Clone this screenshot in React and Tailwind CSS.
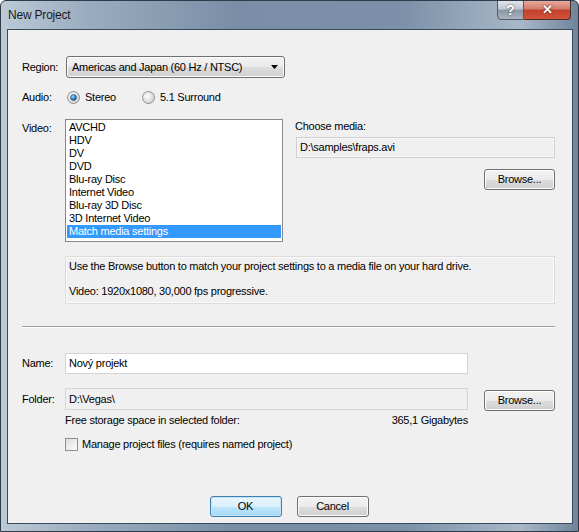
import React from 'react'

const font = { fontFamily: '"Liberation Sans", Arial, sans-serif' }

const Button = ({ children, primary, className = '' }) => (
  <div
    className={`flex items-center justify-center h-[21px] rounded-[3px] border text-[11px] text-black ${
      primary
        ? 'border-[#3c7fb1] bg-[linear-gradient(#eaf6fd_0%,#d9f0fc_50%,#bee6fd_51%,#a7d9f5_100%)] shadow-[inset_0_0_0_1px_#c5e5f7]'
        : 'border-[#707070] bg-[linear-gradient(#f2f2f2_0%,#ebebeb_50%,#dddddd_51%,#cfcfcf_100%)] shadow-[inset_0_0_0_1px_#fcfcfc]'
    } ${className}`}
  >
    {children}
  </div>
)

const Radio = ({ checked }) => (
  <svg width="13" height="13" viewBox="0 0 13 13">
    <defs>
      <radialGradient id="rbg" cx="0.4" cy="0.4" r="0.7">
        <stop offset="0" stopColor="#ffffff" />
        <stop offset="1" stopColor="#cbcbcb" />
      </radialGradient>
      <radialGradient id="rdot" cx="0.4" cy="0.35" r="0.7">
        <stop offset="0" stopColor="#9fd7ff" />
        <stop offset="0.6" stopColor="#2b7fc4" />
        <stop offset="1" stopColor="#1b4f86" />
      </radialGradient>
    </defs>
    <circle cx="6.5" cy="6.5" r="6" fill="url(#rbg)" stroke="#8e8f8f" />
    {checked && <circle cx="6.5" cy="6.5" r="3" fill="url(#rdot)" stroke="#1f4f7f" strokeWidth="0.6" />}
  </svg>
)

const videoItems = [
  'AVCHD',
  'HDV',
  'DV',
  'DVD',
  'Blu-ray Disc',
  'Internet Video',
  'Blu-ray 3D Disc',
  '3D Internet Video',
  'Match media settings',
]

export default function App() {
  return (
    <div
      style={font}
      className="relative w-[579px] h-[532px] overflow-hidden rounded-t-[6px] border border-[#2f3b48] bg-[linear-gradient(90deg,#bccad7_0%,#9aacbf_15%,#7a8fa7_40%,#7c91a9_70%,#a8b8c8_90%,#6f849b_100%)]"
    >
      {/* title bar */}
      <div className="flex h-[28px] items-center pl-[7px] text-[12px] tracking-[-0.2px] text-[#1a1a1a]">
        New Project
      </div>
      <div className="absolute right-[7px] top-[-1px] flex">
        <div className="flex h-[20px] w-[27px] items-center justify-center rounded-bl-[4px] border border-[#4f5b69] bg-[linear-gradient(#dfe5ea_0%,#c0c8d0_45%,#8a96a3_50%,#a9b4bf_100%)] text-[14px] font-bold text-white [text-shadow:0_0_2px_#333]">
          ?
        </div>
        <div className="flex h-[20px] w-[47px] items-center justify-center rounded-br-[4px] border border-l-0 border-[#4f2b26] bg-[linear-gradient(#e9a99c_0%,#d27a6a_45%,#c2412c_50%,#d2543c_100%)] text-[13px] font-bold text-white [text-shadow:0_0_2px_#3a0000]">
          ✕
        </div>
      </div>

      {/* client area */}
      <div className="absolute left-[6px] top-[28px] w-[566px] h-[495px] border border-[#3b4a5a] bg-[#f0f0f0] text-[11px] tracking-[-0.25px] text-black">
        <div className="pl-[14px]">
          {/* Region */}
          <div className="mt-[26px] flex h-[22px] items-center">
            <div className="w-[44px]">Region:</div>
            <div className="flex h-[22px] w-[219px] items-center justify-between rounded-[3px] border border-[#707070] bg-[linear-gradient(#f2f2f2_0%,#ebebeb_50%,#dddddd_51%,#cfcfcf_100%)] pl-[5px] pr-[6px] shadow-[inset_0_0_0_1px_#fcfcfc]">
              <span>Americas and Japan (60 Hz / NTSC)</span>
              <svg width="7" height="4" viewBox="0 0 7 4">
                <path d="M0 0h7L3.5 4z" fill="#000" />
              </svg>
            </div>
          </div>

          {/* Audio */}
          <div className="mt-[9px] flex h-[20px] items-center">
            <div className="w-[45px]">Audio:</div>
            <Radio checked />
            <span className="ml-[5px] w-[57px]">Stereo</span>
            <Radio />
            <span className="ml-[5px]">5.1 Surround</span>
          </div>

          {/* Video */}
          <div className="mt-[12px] flex">
            <div className="w-[43px] pt-[1px]">Video:</div>
            <div className="h-[123px] w-[218px] border border-[#828790] bg-white px-[1px] pt-[1px] leading-[13px]">
              {videoItems.map((item, i) => (
                <div
                  key={item}
                  className={`pl-[2px] ${i === videoItems.length - 1 ? 'bg-[#3399ff] text-white' : ''}`}
                >
                  {item}
                </div>
              ))}
            </div>
            <div className="ml-[12px] w-[260px]">
              <div className="pt-[1px] leading-[13px]">Choose media:</div>
              <div className="mt-[4px] ml-[1px] flex h-[21px] w-[259px] items-center border border-[#d0d0d0] bg-[#f0f0f0] pl-[3px] shadow-[inset_0_0_0_1px_#f8f8f8]">
                D:\samples\fraps.avi
              </div>
              <div className="mt-[11px] flex justify-end">
                <Button className="w-[71px]">Browse...</Button>
              </div>
            </div>
          </div>

          {/* Info */}
          <div className="ml-[43px] mt-[14px] h-[48px] w-[490px] border border-[#dcdcdc] bg-[#f0f0f0] pl-[3px] pt-[3px] shadow-[inset_0_0_0_1px_#fafafa]">
            <div className="leading-[13px]">
              Use the Browse button to match your project settings to a media file on your hard drive.
            </div>
            <div className="mt-[12px] leading-[13px]">Video: 1920x1080, 30,000 fps progressive.</div>
          </div>

          {/* Separator */}
          <div className="mt-[22px] h-[2px] w-[533px] border-t border-[#a0a0a0] border-b border-b-white" />

          {/* Name */}
          <div className="mt-[25px] flex items-center">
            <div className="w-[43px]">Name:</div>
            <div className="flex h-[21px] w-[403px] items-center border border-[#d5d5d5] bg-white pl-[3px]">
              Nový projekt
            </div>
          </div>

          {/* Folder */}
          <div className="mt-[14px] flex items-start">
            <div className="flex h-[22px] w-[43px] items-center">Folder:</div>
            <div>
              <div className="flex h-[22px] w-[403px] items-center border border-[#d5d5d5] bg-[#f0f0f0] pl-[3px]">
                D:\Vegas\
              </div>
              <div className="mt-[4px] flex w-[403px] justify-between leading-[13px]">
                <span>Free storage space in selected folder:</span>
                <span>365,1 Gigabytes</span>
              </div>
              <div className="mt-[9px] flex items-center">
                <div className="h-[13px] w-[13px] border border-[#8e8f8f] bg-[linear-gradient(135deg,#dcdcdc,#fcfcfc)]" />
                <span className="ml-[4px]">Manage project files (requires named project)</span>
              </div>
            </div>
            <Button className="ml-[16px] mt-[2px] w-[71px]">Browse...</Button>
          </div>
        </div>

        {/* OK / Cancel */}
        <div className="absolute bottom-[6px] left-0 right-0 flex justify-center gap-[15px] pr-[2px]">
          <Button primary className="w-[72px]">OK</Button>
          <Button className="w-[72px]">Cancel</Button>
        </div>
      </div>
    </div>
  )
}
